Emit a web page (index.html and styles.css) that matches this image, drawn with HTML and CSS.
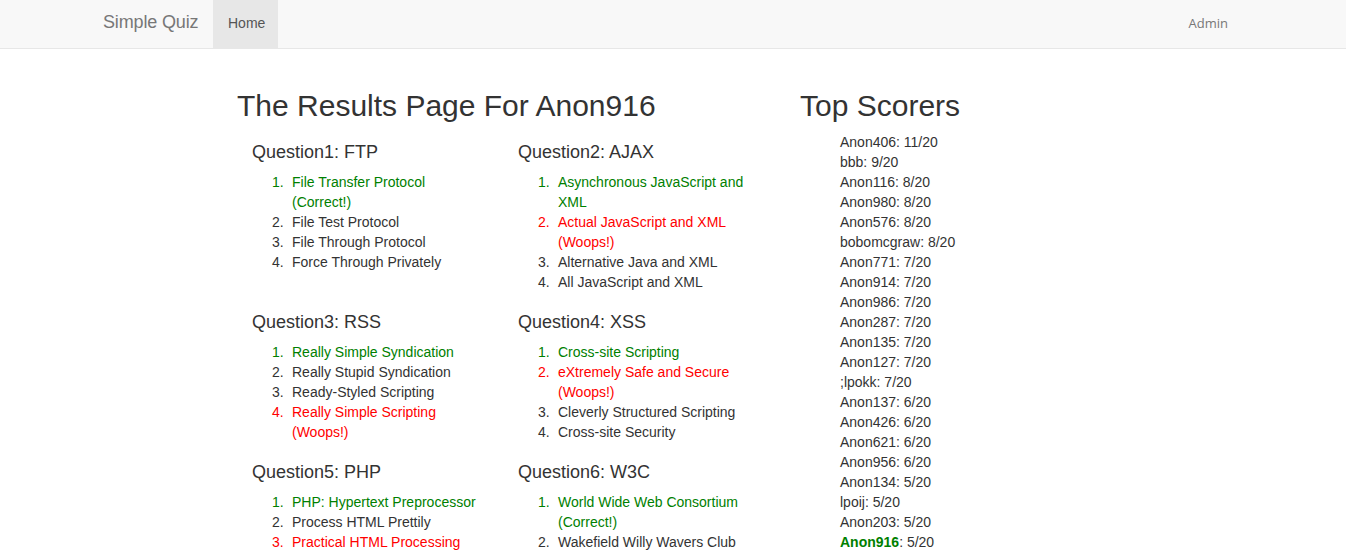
FILE: index.html
```html
<!DOCTYPE html>
<html lang="en">
<head>
<meta charset="utf-8">
<title>Simple Quiz - Results</title>
<link rel="stylesheet" href="styles.css">
</head>
<body>
<nav class="navbar">
  <div class="nav-inner">
    <a class="brand" href="#">Simple Quiz</a>
    <ul class="nav-links">
      <li><a class="nav-link active" href="#">Home</a></li>
    </ul>
    <ul class="nav-right">
      <li><a class="nav-link admin" href="#">Admin</a></li>
    </ul>
  </div>
</nav>

<main class="main">
  <section class="results">
    <h2 class="page-title">The Results Page For Anon916</h2>
    <div class="q-row">
      <div class="q-col">
        <h4 class="q-title">Question1: FTP</h4>
        <ol class="answers">
          <li class="right">File Transfer Protocol (Correct!)</li>
          <li>File Test Protocol</li>
          <li>File Through Protocol</li>
          <li>Force Through Privately</li>
        </ol>
      </div>
      <div class="q-col">
        <h4 class="q-title">Question2: AJAX</h4>
        <ol class="answers">
          <li class="right">Asynchronous JavaScript and XML</li>
          <li class="wrong">Actual JavaScript and XML (Woops!)</li>
          <li>Alternative Java and XML</li>
          <li>All JavaScript and XML</li>
        </ol>
      </div>
    </div>
    <div class="q-row">
      <div class="q-col">
        <h4 class="q-title">Question3: RSS</h4>
        <ol class="answers">
          <li class="right">Really Simple Syndication</li>
          <li>Really Stupid Syndication</li>
          <li>Ready-Styled Scripting</li>
          <li class="wrong">Really Simple Scripting (Woops!)</li>
        </ol>
      </div>
      <div class="q-col">
        <h4 class="q-title">Question4: XSS</h4>
        <ol class="answers">
          <li class="right">Cross-site Scripting</li>
          <li class="wrong">eXtremely Safe and Secure (Woops!)</li>
          <li>Cleverly Structured Scripting</li>
          <li>Cross-site Security</li>
        </ol>
      </div>
    </div>
    <div class="q-row">
      <div class="q-col">
        <h4 class="q-title">Question5: PHP</h4>
        <ol class="answers">
          <li class="right">PHP: Hypertext Preprocessor</li>
          <li>Process HTML Prettily</li>
          <li class="wrong">Practical HTML Processing (Woops!)</li>
        </ol>
      </div>
      <div class="q-col">
        <h4 class="q-title">Question6: W3C</h4>
        <ol class="answers">
          <li class="right">World Wide Web Consortium (Correct!)</li>
          <li>Wakefield Willy Wavers Club</li>
        </ol>
      </div>
    </div>
  </section>

  <aside class="scorers">
    <h2 class="page-title">Top Scorers</h2>
    <ul class="score-list">
      <li>Anon406: 11/20</li>
      <li>bbb: 9/20</li>
      <li>Anon116: 8/20</li>
      <li>Anon980: 8/20</li>
      <li>Anon576: 8/20</li>
      <li>bobomcgraw: 8/20</li>
      <li>Anon771: 7/20</li>
      <li>Anon914: 7/20</li>
      <li>Anon986: 7/20</li>
      <li>Anon287: 7/20</li>
      <li>Anon135: 7/20</li>
      <li>Anon127: 7/20</li>
      <li>;lpokk: 7/20</li>
      <li>Anon137: 6/20</li>
      <li>Anon426: 6/20</li>
      <li>Anon621: 6/20</li>
      <li>Anon956: 6/20</li>
      <li>Anon134: 5/20</li>
      <li>lpoij: 5/20</li>
      <li>Anon203: 5/20</li>
      <li><strong class="me">Anon916</strong>: 5/20</li>
    </ul>
  </aside>
</main>
</body>
</html>
```

FILE: styles.css
```css
* { box-sizing: border-box; }

html, body {
  margin: 0;
  padding: 0;
}

body {
  font-family: "Liberation Sans", Arial, Helvetica, sans-serif;
  font-size: 14px;
  line-height: 20px;
  color: #333;
  background: #fff;
}

a { text-decoration: none; }

.navbar {
  background: #f8f8f8;
  border-bottom: 1px solid #e7e7e7;
  height: 49px;
  margin-bottom: 20px;
}

.nav-inner {
  width: 1170px;
  margin: 0 auto;
  display: flex;
  align-items: stretch;
  height: 48px;
}

.brand {
  display: block;
  flex-shrink: 0;
  white-space: nowrap;
  padding: 12px 15px 0;
  width: 125px;
  font-size: 18px;
  line-height: 20px;
  color: #777;
  letter-spacing: -0.15px;
}

.nav-links, .nav-right {
  list-style: none;
  margin: 0;
  padding: 0;
  display: flex;
}

.nav-right { margin-left: auto; margin-right: 15px; }

.nav-link {
  display: block;
  height: 48px;
  padding: 13px 15px 0;
  line-height: 20px;
  color: #777;
  white-space: nowrap;
}

.nav-link.active {
  background: #e7e7e7;
  color: #555;
  width: 65px;
}

.nav-link.admin {
  font-family: "Open Sans", "Liberation Sans", sans-serif;
  font-size: 13px;
  color: #777;
}

.main {
  display: flex;
  padding-left: 237px;
}

.results {
  width: 563px;
}

.page-title {
  font-size: 30px;
  font-weight: 500;
  line-height: 33px;
  margin: 20px 0 10px;
  color: #333;
}

.q-row {
  display: flex;
  width: 532px;
}

.q-col {
  width: 266px;
  padding: 0 15px;
}

.q-title {
  font-size: 18px;
  font-weight: 500;
  line-height: 20px;
  margin: 10px 0;
}

.answers {
  margin: 0 0 10px;
  padding-left: 40px;
  list-style: none;
  counter-reset: answer;
}

.answers li {
  counter-increment: answer;
}

.answers li::before {
  content: counter(answer) ".";
  display: inline-block;
  width: 20px;
  margin-left: -20px;
}

.answers .right { color: green; }
.answers .wrong { color: red; }

.scorers {
  flex: 1;
}

.score-list {
  list-style: none;
  margin: 0 0 10px;
  padding-left: 40px;
}

.me {
  color: green;
  font-weight: bold;
}
```
